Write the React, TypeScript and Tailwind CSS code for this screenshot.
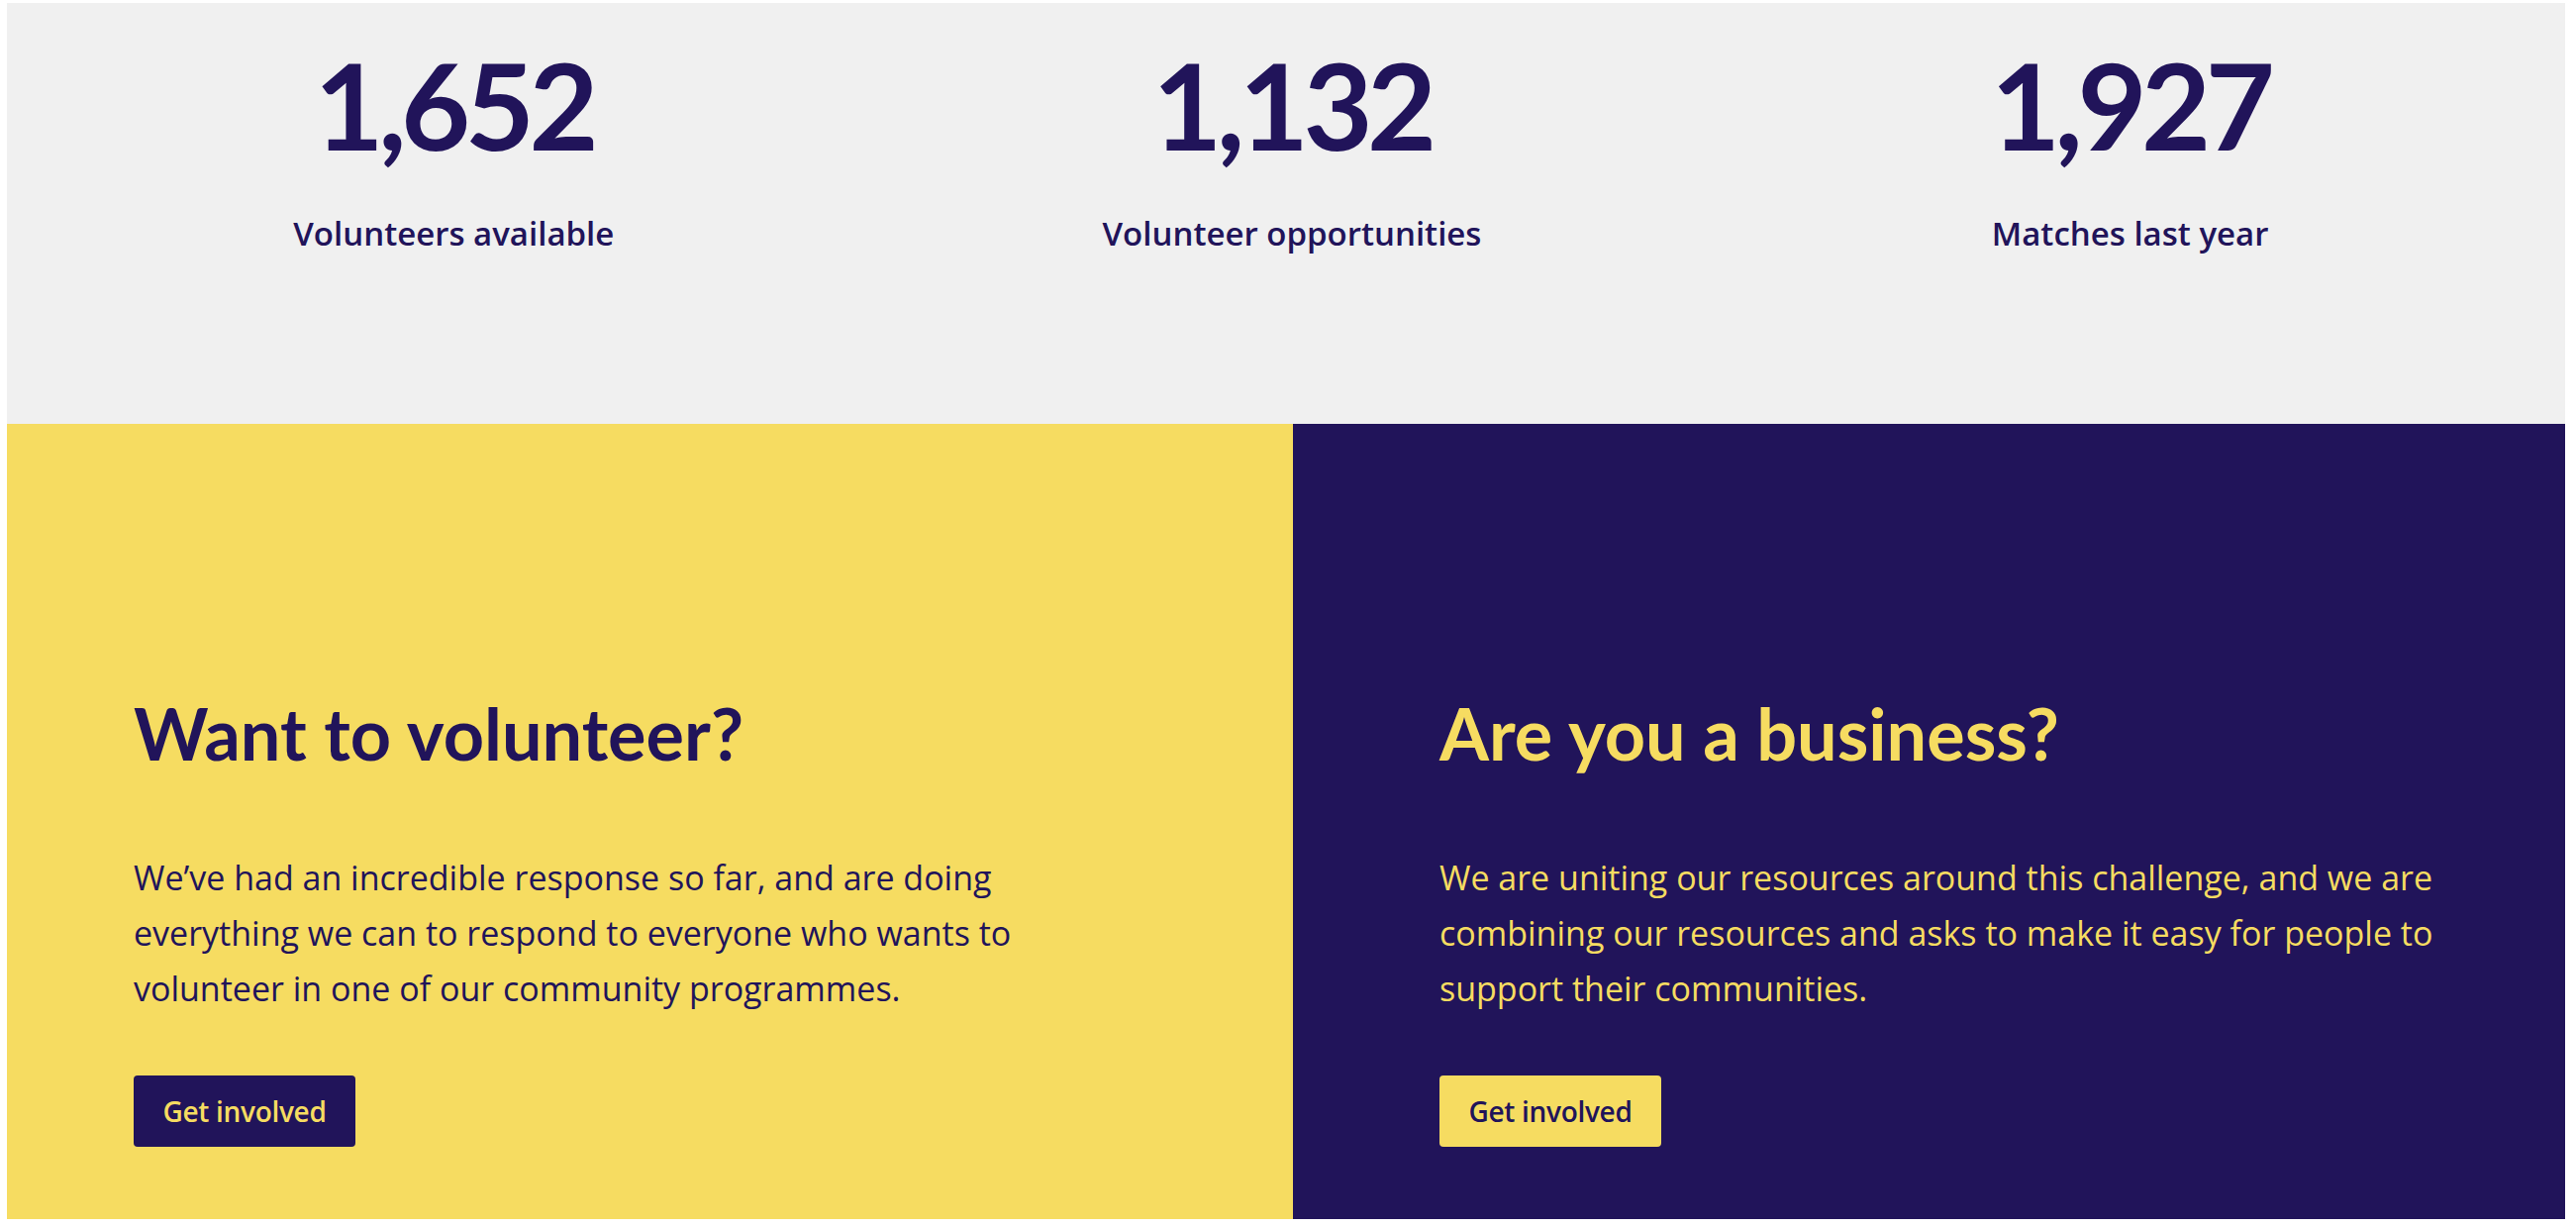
import React from "react";

const NAVY = "text-[#21145a]";
const OPEN = { fontFamily: "'Open Sans', Lato, sans-serif" };

function Stat({ value, label }: { value: string; label: string }) {
  return (
    <div className="flex flex-col items-center">
      <div className={`${NAVY} text-[121px] leading-[121px] font-bold tracking-[-5.5px]`}>{value}</div>
      <div className={`${NAVY} mt-[50px] text-[33px] leading-[40px] font-semibold`} style={OPEN}>
        {label}
      </div>
    </div>
  );
}

export default function App() {
  return (
    <div
      className="bg-white pt-[3px] pl-[7px] pr-[11px] pb-[9px] w-[2602px] h-[1240px]"
      style={{ fontFamily: "Lato, 'Open Sans', sans-serif" }}
    >
      <section className="bg-[#f0f0f0] h-[425px] grid grid-cols-3 pl-[28px] pr-[16px] pt-[42px]">
        <Stat value="1,652" label="Volunteers available" />
        <Stat value="1,132" label="Volunteer opportunities" />
        <Stat value="1,927" label="Matches last year" />
      </section>
      <section className="flex h-[803px]">
        <div className="w-[1299px] bg-[#f6dc61] pl-[128px] pt-[270px]">
          <h2 className="text-[#21145a] text-[72px] leading-[84px] font-bold">Want to volunteer?</h2>
          <p className="text-[#21145a] text-[34px] leading-[56px] mt-[76px]" style={OPEN}>
            We’ve had an incredible response so far, and are doing
            <br />
            everything we can to respond to everyone who wants to
            <br />
            volunteer in one of our community programmes.
          </p>
          <button
            className="mt-[60px] h-[72px] w-[224px] rounded-[4px] bg-[#21145a] text-[#f6dc61] text-[28px] font-semibold tracking-[-0.3px]"
            style={OPEN}
          >
            Get involved
          </button>
        </div>
        <div className="flex-1 bg-[#21145a] pl-[148px] pt-[270px]">
          <h2 className="text-[#f6dc61] text-[72px] leading-[84px] font-bold">Are you a business?</h2>
          <p className="text-[#f6dc61] text-[34px] leading-[56px] mt-[76px]" style={OPEN}>
            We are uniting our resources around this challenge, and we are
            <br />
            combining our resources and asks to make it easy for people to
            <br />
            support their communities.
          </p>
          <button
            className="mt-[60px] h-[72px] w-[224px] rounded-[4px] bg-[#f6dc61] text-[#21145a] text-[28px] font-semibold tracking-[-0.3px]"
            style={OPEN}
          >
            Get involved
          </button>
        </div>
      </section>
    </div>
  );
}
